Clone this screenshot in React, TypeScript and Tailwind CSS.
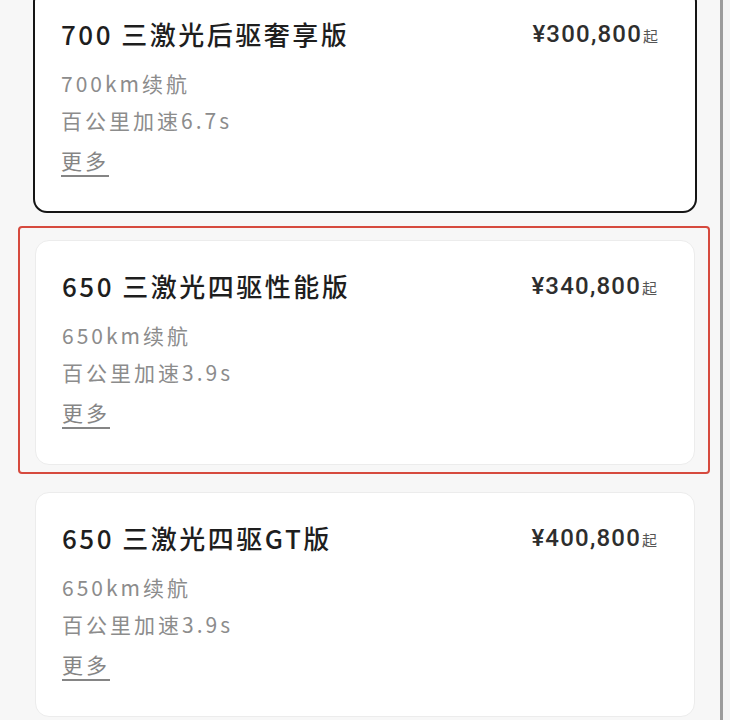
import React from 'react'

type Trim = {
  id: string
  name: string
  range: string
  accel: string
  price: string
}

const trims: Trim[] = [
  { id: 'a', name: '700 三激光后驱奢享版', range: '700km续航', accel: '百公里加速6.7s', price: '¥300,800' },
  { id: 'b', name: '650 三激光四驱性能版', range: '650km续航', accel: '百公里加速3.9s', price: '¥340,800' },
  { id: 'c', name: '650 三激光四驱GT版', range: '650km续航', accel: '百公里加速3.9s', price: '¥400,800' },
]

const cjk = { fontFamily: "'Noto Sans CJK SC', 'Noto Sans', sans-serif" }

function TrimCard({ trim, selected, marked }: { trim: Trim; selected: boolean; marked: boolean }) {
  return (
    <div
      className={`relative bg-white rounded-[14px] pl-[26px] pr-[37px] ${
        selected
          ? 'border-2 border-[#151515] pt-[28px] pb-[32px] -mx-[2px]'
          : 'border border-[#ececec] pt-[29px] pb-[33px]'
      }`}
    >
      <div className="flex items-center justify-between h-[32px]">
        <span className="text-[26px] leading-[32px] font-medium tracking-[2.5px] text-[#1e1e1e]" style={cjk}>
          {trim.name}
        </span>
        <span className="flex items-baseline text-[#2e2e2e]">
          <span
            className="text-[24px] leading-[32px] font-medium tracking-[1.2px]"
            style={{ fontFamily: "Roboto, 'Liberation Sans', sans-serif" }}
          >
            {trim.price}
          </span>
          <span className="text-[15px] text-[#555] ml-[1px]" style={cjk}>
            起
          </span>
        </span>
      </div>
      <div className="mt-[15px] text-[21px] leading-[37px] tracking-[3px] text-[#8c8c8c]" style={cjk}>
        <p>{trim.range}</p>
        <p>{trim.accel}</p>
        <p className="mt-[3px]">
          <span className="underline underline-offset-[6px] decoration-[1.5px] text-[#858585]">更多</span>
        </p>
      </div>
      {marked && (
        <div className="pointer-events-none absolute -left-[18px] -right-[16px] -top-[15px] -bottom-[10px] border-2 border-[#d64a3e] rounded-[4px]" />
      )}
    </div>
  )
}

export default function App() {
  return (
    <div className="w-[730px] h-[720px] overflow-hidden flex bg-[#f7f7f7]">
      <div className="flex-1 pl-[35px] pr-[25px]">
        <div className="-mt-[12px] flex flex-col gap-[27px]">
          {trims.map((t, i) => (
            <TrimCard key={t.id} trim={t} selected={i === 0} marked={i === 1} />
          ))}
        </div>
      </div>
      <div className="w-[3px] bg-[#9c9c9c]" />
      <div className="w-[7px] bg-[#f5f5f5]" />
    </div>
  )
}
